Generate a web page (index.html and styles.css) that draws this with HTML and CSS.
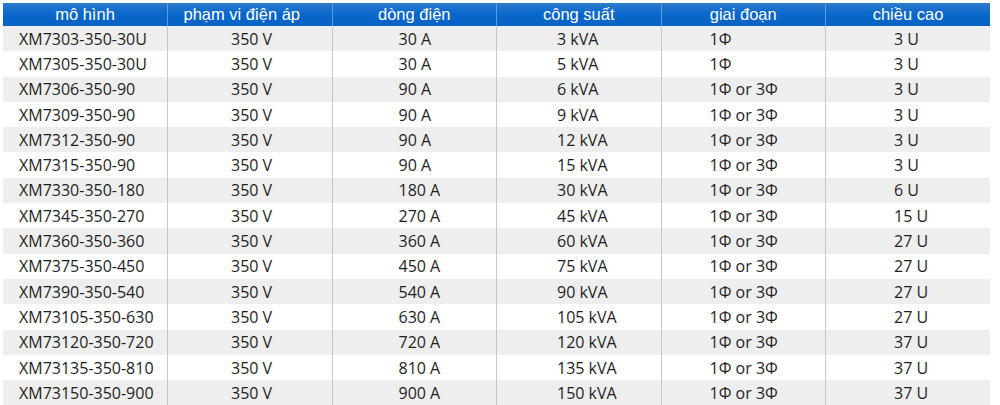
FILE: index.html
```html
<!DOCTYPE html>
<html>
<head>
<meta charset="utf-8">
<link rel="stylesheet" href="styles.css">
</head>
<body>
<table class="spec">
<thead>
<tr><th>mô hình</th><th class="shift">phạm vi điện áp</th><th>dòng điện</th><th>công suất</th><th>giai đoạn</th><th>chiều cao</th></tr>
</thead>
<tbody>
<tr><td>XM7303-350-30U</td><td>350 V</td><td>30 A</td><td>3 kVA</td><td>1Φ</td><td>3 U</td></tr>
<tr><td>XM7305-350-30U</td><td>350 V</td><td>30 A</td><td>5 kVA</td><td>1Φ</td><td>3 U</td></tr>
<tr><td>XM7306-350-90</td><td>350 V</td><td>90 A</td><td>6 kVA</td><td>1Φ or 3Φ</td><td>3 U</td></tr>
<tr><td>XM7309-350-90</td><td>350 V</td><td>90 A</td><td>9 kVA</td><td>1Φ or 3Φ</td><td>3 U</td></tr>
<tr><td>XM7312-350-90</td><td>350 V</td><td>90 A</td><td>12 kVA</td><td>1Φ or 3Φ</td><td>3 U</td></tr>
<tr><td>XM7315-350-90</td><td>350 V</td><td>90 A</td><td>15 kVA</td><td>1Φ or 3Φ</td><td>3 U</td></tr>
<tr><td>XM7330-350-180</td><td>350 V</td><td>180 A</td><td>30 kVA</td><td>1Φ or 3Φ</td><td>6 U</td></tr>
<tr><td>XM7345-350-270</td><td>350 V</td><td>270 A</td><td>45 kVA</td><td>1Φ or 3Φ</td><td>15 U</td></tr>
<tr><td>XM7360-350-360</td><td>350 V</td><td>360 A</td><td>60 kVA</td><td>1Φ or 3Φ</td><td>27 U</td></tr>
<tr><td>XM7375-350-450</td><td>350 V</td><td>450 A</td><td>75 kVA</td><td>1Φ or 3Φ</td><td>27 U</td></tr>
<tr><td>XM7390-350-540</td><td>350 V</td><td>540 A</td><td>90 kVA</td><td>1Φ or 3Φ</td><td>27 U</td></tr>
<tr><td>XM73105-350-630</td><td>350 V</td><td>630 A</td><td>105 kVA</td><td>1Φ or 3Φ</td><td>27 U</td></tr>
<tr><td>XM73120-350-720</td><td>350 V</td><td>720 A</td><td>120 kVA</td><td>1Φ or 3Φ</td><td>37 U</td></tr>
<tr><td>XM73135-350-810</td><td>350 V</td><td>810 A</td><td>135 kVA</td><td>1Φ or 3Φ</td><td>37 U</td></tr>
<tr><td>XM73150-350-900</td><td>350 V</td><td>900 A</td><td>150 kVA</td><td>1Φ or 3Φ</td><td>37 U</td></tr>
</tbody>
</table>
</body>
</html>
```
FILE: styles.css
```css
html, body {
  margin: 0;
  padding: 0;
  background: #ffffff;
  overflow: hidden;
}
body {
  padding: 3px 0 0 3px;
}
.spec {
  border-collapse: collapse;
  table-layout: fixed;
  width: 987px;
  font-family: "Open Sans", "Liberation Sans", sans-serif;
  font-size: 16px;
  color: #1e1e1e;
}
.spec th {
  height: 23px;
  padding: 0;
  font-family: "Liberation Sans", Arial, sans-serif;
  font-weight: normal;
  font-size: 16.5px;
  line-height: 1;
  color: #ffffff;
  text-align: center;
  background: linear-gradient(#2f7ccb 0%, #0a67cb 45%, #0762c4 100%);
  border-left: 1px solid #5c9ee0;
}
.spec th:first-child { border-left: none; }
.spec th.shift { padding-right: 16px; }
.spec td {
  height: 25.3px;
  padding: 0;
  text-align: left;
  white-space: nowrap;
  border-left: 1px solid #c8c8c8;
  line-height: 1;
}
.spec td:first-child { border-left: none; padding-left: 16px; }
.spec td:nth-child(2) { padding-left: 63px; }
.spec td:nth-child(3) { padding-left: 66px; }
.spec td:nth-child(4) { padding-left: 60px; }
.spec td:nth-child(5) { padding-left: 48px; }
.spec td:nth-child(6) { padding-left: 68px; }
.spec tbody tr:nth-child(odd) td { background: #eeeeee; }
.spec tbody tr:nth-child(even) td { background: #ffffff; }
```
